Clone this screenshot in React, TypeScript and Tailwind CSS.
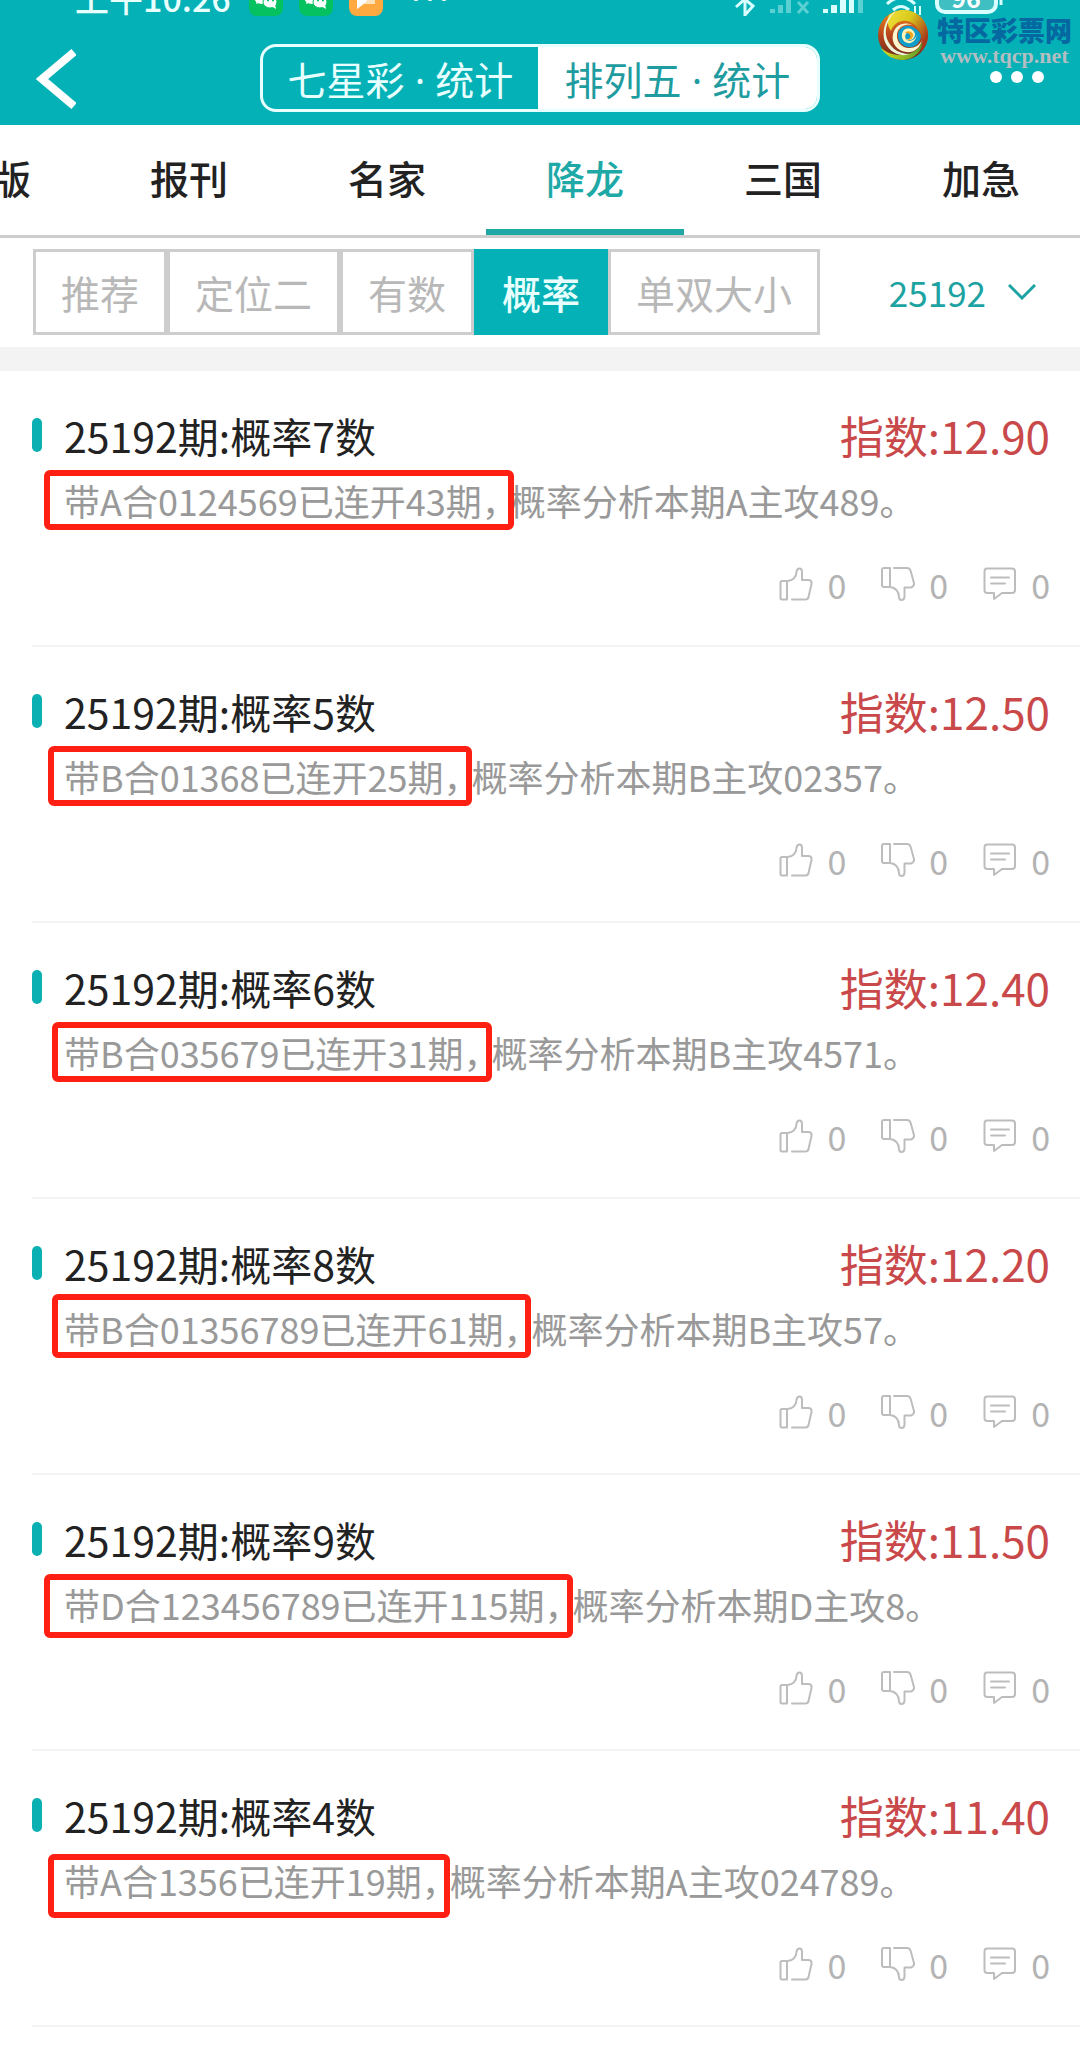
import clsx from "clsx";

type Entry = {
  digits: number;
  index: string;
  streak: string;
  advice: string;
  frame: string;
};

const tabs = ["报刊", "名家", "降龙", "三国", "加急"];
const filters = ["推荐", "定位二", "有数", "概率", "单双大小"];

const entries: Entry[] = [
  { digits: 7, index: "12.90", streak: "带A合0124569已连开43期，", advice: "概率分析本期A主攻489。", frame: "-left-5 right-1 -top-1 -bottom-1" },
  { digits: 5, index: "12.50", streak: "带B合01368已连开25期，", advice: "概率分析本期B主攻02357。", frame: "-left-4 right-2 -top-1 -bottom-1" },
  { digits: 6, index: "12.40", streak: "带B合035679已连开31期，", advice: "概率分析本期B主攻4571。", frame: "-left-3 right-2 -top-1 -bottom-1" },
  { digits: 8, index: "12.20", streak: "带B合01356789已连开61期，", advice: "概率分析本期B主攻57。", frame: "-left-3 right-2 -top-2 -bottom-1" },
  { digits: 9, index: "11.50", streak: "带D合123456789已连开115期，", advice: "概率分析本期D主攻8。", frame: "-left-5 right-2 -top-1 -bottom-2" },
  { digits: 4, index: "11.40", streak: "带A合1356已连开19期，", advice: "概率分析本期A主攻024789。", frame: "-left-4 right-2 top-0 -bottom-3" },
];

function WechatBadge() {
  return (
    <svg width="34" height="34" viewBox="0 0 34 34">
      <rect width="34" height="34" rx="8" fill="#05c160" />
      <ellipse cx="13" cy="15" rx="8" ry="7" fill="#fff" />
      <path d="M8 18l-1 4 5-2z" fill="#fff" />
      <ellipse cx="21" cy="20" rx="7" ry="6" fill="#fff" stroke="#05c160" />
      <path d="M22 24l5 3-1-5z" fill="#fff" />
      <circle cx="19" cy="18.500" r="1" fill="#05c160" />
      <circle cx="24" cy="18.500" r="1" fill="#05c160" />
    </svg>
  );
}

function StatusBar() {
  return (
    <div className="flex h-4 items-end justify-between px-[75px]">
      <div className="flex items-end">
        <span className="w-[174px] text-[34px] leading-[36px] font-medium">上午10:26</span>
        <div className="flex items-end gap-4">
          <WechatBadge />
          <WechatBadge />
          <svg width="34" height="34" viewBox="0 0 34 34">
            <rect width="34" height="34" rx="8" fill="#ffa940" />
            <path d="M8 9h18v13H15l-7 5z" fill="#ffe2b8" />
            <path d="M8 9h10v10l-10 8z" fill="#fff" />
          </svg>
          <svg className="ml-3" width="38" height="18" viewBox="0 0 38 18" fill="#fff">
            <circle cx="5" cy="0" r="3" />
            <circle cx="19" cy="0" r="3" />
            <circle cx="33" cy="0" r="3" />
          </svg>
        </div>
      </div>
      <div className="flex items-end">
        <svg width="188" height="34" viewBox="0 0 188 34" fill="none" stroke="#d9feff" strokeWidth="3">
          <path d="M1 25L18 10 10 2V33L18 24 1 10" />
          <g stroke="none" fill="#5ccfd2">
            <path d="M35 27h5v4h-5zM43 23h5v8h-5zM51 17h5v14h-5z" />
          </g>
          <path d="M63 20l10 11M73 20l-10 11" stroke="#5ccfd2" />
          <g stroke="none" fill="#d9feff">
            <path d="M88 27h5v4h-5zM96 23h6v8h-6zM105 17h6v14h-6zM114 11h5v20h-5z" />
            <path d="M123 6h5v25h-5z" fill="#5ccfd2" />
          </g>
          <path d="M152 22q14-13 28 0M158 28q8-7 16 0" />
          <path d="M180 33v-9M185 24v9" strokeWidth="2" />
        </svg>
        <svg className="ml-3" width="70" height="34" viewBox="0 0 70 34">
          <rect x="2" y="-2" width="59" height="32" rx="8" fill="#3fbfc2" stroke="#d9feff" strokeWidth="4" />
          <path d="M66 15v8" stroke="#d9feff" strokeWidth="3" />
          <text x="31" y="26" textAnchor="middle" fontSize="25" fontWeight="700" fill="#fff">96</text>
        </svg>
      </div>
    </div>
  );
}

function SiteLogo() {
  return (
    <div className="absolute right-2 top-[9px] flex items-start gap-2">
      <svg width="52" height="52" viewBox="0 0 52 52">
        <defs>
          <linearGradient id="rim" x1="0" y1="0" x2="0" y2="1">
            <stop offset="0" stopColor="#f08a1c" />
            <stop offset="0.500" stopColor="#b8441c" />
            <stop offset="1" stopColor="#6b2a1c" />
          </linearGradient>
          <linearGradient id="crown" x1="0" y1="0" x2="1" y2="0.600">
            <stop offset="0" stopColor="#f3e13a" />
            <stop offset="0.500" stopColor="#d8c81c" />
            <stop offset="1" stopColor="#a8381c" />
          </linearGradient>
          <linearGradient id="base" x1="0" y1="0" x2="1" y2="0">
            <stop offset="0" stopColor="#d3e01f" />
            <stop offset="1" stopColor="#5c9a2a" />
          </linearGradient>
        </defs>
        <circle cx="26" cy="26" r="25" fill="url(#rim)" />
        <path d="M12 6C24-3 40 1 47 12 54 24 51 36 44 43 47 32 44 19 35 14 27 9 17 13 14 22 10 16 10 11 12 6z" fill="url(#crown)" />
        <path d="M4 39C12 46 24 48 34 44 39 42 43 38 45 33 46 41 38 50 26 51 16 51 8 46 4 39z" fill="url(#base)" />
        <path d="M20 1C12 8 8 17 9 26 11 37 20 45 33 45 22 49 10 42 7 30 5 18 10 7 20 1z" fill="#e9f6dc" />
        <path d="M45 31C43 40 36 44 29 43 20 42 14 34 16 25 18 16 27 12 35 16 28 14 21 18 20 25 19 33 25 39 32 39 38 39 43 36 45 31z" fill="#fff6cf" />
        <path d="M44 28C42 36 37 39 31 38 24 37 20 31 21 25 22 18 30 15 36 18 42 21 44 25 44 28z" fill="#0e9ccb" />
        <path d="M40 25C39 33 33 36 28 33 24 30 24 24 27 21 31 18 37 20 38 25 38 30 33 33 29 30 33 31 35 28 34 26 33 23 30 23 29 25 27 28 29 32 33 32 37 31 39 29 40 25z" fill="#fff2b8" />
        <path d="M28 24c2-3 7-2 8 1s-2 7-6 6c3-1 4-3 3-5s-3-2-5-2z" fill="#f2a51c" />
      </svg>
      <div className="flex flex-col items-center">
        <span className="mt-[6px] text-[27px] leading-[30px] font-black text-[#0668a0]">特区彩票网</span>
        <span className="font-['Liberation_Serif',serif] text-[22px] leading-[22px] font-bold text-[#b3bec2]">www.tqcp.net</span>
      </div>
    </div>
  );
}

function ThumbUp() {
  return (
    <svg width="34" height="34" viewBox="0 0 34 34" fill="none" stroke="#bdbdbd" strokeWidth="2" strokeLinejoin="round" strokeLinecap="round">
      <path d="M8 14H3q-1.500 0-1.500 1.500V31q0 1.500 1.500 1.500H8z" />
      <path d="M8.500 14Q17 13 17.500 5 18 1.500 20.500 1.500 23 1.500 23 5V13H30Q33 13.500 32.500 17L29.500 30Q29 32.500 26.500 32.500H13" />
    </svg>
  );
}

function ThumbDown() {
  return (
    <svg width="34" height="34" viewBox="0 0 34 34" fill="none" stroke="#bdbdbd" strokeWidth="2" strokeLinejoin="round" strokeLinecap="round">
      <path d="M9 1H3Q1 1 1 3V18Q1 20 3 20H9z" />
      <path d="M13 1H26Q28.500 1 29.500 3.500L33 16Q33.500 19.500 30 20.500H23.500V30Q23 33 20.500 33 18 33 18 30 17.500 21 9 20" />
    </svg>
  );
}

function Comment() {
  return (
    <svg width="34" height="34" viewBox="0 0 34 34" fill="none" stroke="#bdbdbd" strokeWidth="2" strokeLinejoin="round" strokeLinecap="round">
      <path d="M4 1.500H29Q32 1.500 32 4.500V23Q32 26 29 26H19L11 32V26H4Q1.500 26 1.500 23V4.500Q1.500 1.500 4 1.500z" />
      <path d="M8 10.500H26M8 16.500H22" />
    </svg>
  );
}

function EntryCard({ entry }: { entry: Entry }) {
  return (
    <article className="ml-8 border-b-2 border-[#f3f3f3] pt-[34px] pr-[30px] pb-[14px]">
      <div className="flex h-[60px] items-center justify-between">
        <h2 className="flex items-center gap-[22px] text-[41px] leading-[60px] text-[#222]">
          <span className="h-[34px] w-[10px] rounded-full bg-[#0bb0b3]" />
          25192期:概率{entry.digits}数
        </h2>
        <span className="text-[44px] leading-[60px] text-[#c9494b]">指数:{entry.index}</span>
      </div>
      <p className="h-[72px] pl-8 text-[36px] leading-[70px] whitespace-nowrap text-[#999]">
        <span className="relative -mr-2 inline-block leading-[52px]">
          {entry.streak}
          <span className={clsx("absolute rounded-md border-[6px] border-[#ff2013]", entry.frame)} />
        </span>
        {entry.advice}
      </p>
      <div className="flex h-[94px] items-center justify-end gap-[35px] text-[34px] text-[#b3b3b3]">
        <button type="button" aria-label="赞" className="flex items-center gap-[14px]">
          <ThumbUp />0
        </button>
        <button type="button" aria-label="踩" className="flex items-center gap-[14px]">
          <ThumbDown />0
        </button>
        <button type="button" aria-label="评论" className="flex items-center gap-[14px]">
          <Comment />0
        </button>
      </div>
    </article>
  );
}

export default function App() {
  return (
    <div className="min-h-screen overflow-hidden bg-white font-['Noto_Sans_CJK_SC',sans-serif]">
      <header className="relative h-[125px] overflow-hidden bg-[#03b1b6] text-[#e8ffff]">
        <StatusBar />
        <div className="flex items-start justify-between px-9 pt-7">
          <button type="button" aria-label="返回" className="w-[54px] pt-1">
            <svg width="40" height="62" viewBox="0 0 40 62" fill="none" stroke="#fff" strokeWidth="8">
              <path d="M38 4L6 31l32 27" />
            </svg>
          </button>
          <div className="flex h-[68px] overflow-hidden rounded-2xl border-[3px] border-[#e8ffff] text-[39px] leading-[62px] whitespace-nowrap">
            <button type="button" className="w-[275px]">
              七星彩<span className="font-['Noto_Sans']"> · </span>统计
            </button>
            <button type="button" className="w-[279px] bg-white text-[#1f9c9f]">
              排列五<span className="font-['Noto_Sans']"> · </span>统计
            </button>
          </div>
          <button type="button" aria-label="更多" className="pt-[27px]">
            <svg width="54" height="12" viewBox="0 0 54 12" fill="#fff">
              <circle cx="6" cy="6" r="6" />
              <circle cx="27" cy="6" r="6" />
              <circle cx="48" cy="6" r="6" />
            </svg>
          </button>
        </div>
        <SiteLogo />
      </header>

      <nav className="flex h-[113px] border-b-[3px] border-[#cdcdcd] text-[39px] font-medium text-[#222]">
        <button type="button" className="-ml-2 w-[98px] border-b-[6px] border-transparent text-left">版</button>
        {tabs.map((tab) => (
          <button
            key={tab}
            type="button"
            className={clsx("flex-1 border-b-[6px]", tab === "降龙" ? "border-[#1ea9a6] text-[#1ea9a6]" : "border-transparent")}
          >
            {tab}
          </button>
        ))}
      </nav>

      <div className="flex items-center justify-between border-b-[24px] border-[#f3f3f3] pt-[11px] pr-11 pb-3 pl-[33px]">
        <div className="flex text-[39px] leading-[80px]">
          {filters.map((filter) => (
            <button
              key={filter}
              type="button"
              className={clsx(
                "border-[3px] px-[25px]",
                filter === "概率" ? "border-[#03b1b6] bg-[#03b1b6] font-medium text-[#e8ffff]" : "border-[#cdcdcd] text-[#b8b8b8]",
              )}
            >
              {filter}
            </button>
          ))}
        </div>
        <button type="button" className="flex items-center gap-[22px] text-[35px] text-[#1ea3a3]">
          25192
          <svg width="28" height="16" viewBox="0 0 28 16" fill="none" stroke="#1ea3a3" strokeWidth="3">
            <path d="M1 1l13 13L27 1" />
          </svg>
        </button>
      </div>

      <main>
        {entries.map((entry) => (
          <EntryCard key={entry.digits} entry={entry} />
        ))}
      </main>
    </div>
  );
}
